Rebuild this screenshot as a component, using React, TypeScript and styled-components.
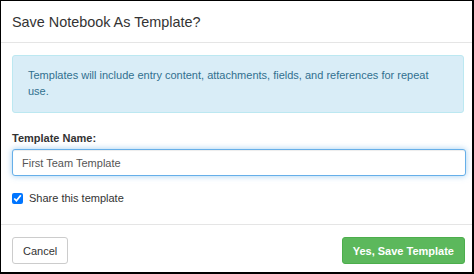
import React from "react";
import styled, { createGlobalStyle } from "styled-components";

const GlobalStyle = createGlobalStyle`
  html, body {
    margin: 0;
    padding: 0;
    background: #ffffff;
  }
  body {
    font-family: "Liberation Sans", Arial, sans-serif;
    color: #333333;
  }
`;

const Modal = styled.div`
  box-sizing: border-box;
  width: 474px;
  height: 274px;
  border-style: solid;
  border-color: #000000;
  border-width: 1px 2px 2px 1px;
  background: #ffffff;
  display: flex;
  flex-direction: column;
`;

const Header = styled.div`
  height: 41px;
  padding: 0 11px;
  border-bottom: 1px solid #e5e5e5;
  display: flex;
  align-items: center;
`;

const Title = styled.h4`
  margin: 0;
  font-size: 14.4px;
  font-weight: normal;
  color: #333333;
`;

const Body = styled.div`
  flex: 1;
  padding: 12px 8px 0 11px;
  display: flex;
  flex-direction: column;
`;

const Alert = styled.div`
  box-sizing: border-box;
  height: 58px;
  padding: 11px 15px;
  background: #d9edf7;
  border: 1px solid #bce8f1;
  border-radius: 3px;
  color: #31708f;
  font-size: 11px;
  line-height: 16px;
`;

const Label = styled.label`
  margin-top: 17px;
  font-size: 11px;
  font-weight: bold;
  line-height: 16px;
  color: #333333;
`;

const Input = styled.input`
  box-sizing: border-box;
  margin-top: 3px;
  width: 454px;
  height: 27px;
  padding: 0 9px;
  border: 1px solid #66afe9;
  border-radius: 3px;
  outline: none;
  box-shadow: inset 0 1px 1px rgba(0, 0, 0, 0.075),
    0 0 6px rgba(102, 175, 233, 0.6);
  font-family: "Liberation Sans", Arial, sans-serif;
  font-size: 11px;
  color: #555555;
`;

const CheckRow = styled.label`
  margin-top: 14px;
  display: flex;
  align-items: center;
  gap: 6px;
  font-size: 11px;
  line-height: 16px;
  color: #333333;
`;

const Check = styled.input`
  margin: 0;
  width: 11px;
  height: 11px;
`;

const Footer = styled.div`
  height: 35px;
  padding: 12px 7px 0 11px;
  border-top: 1px solid #e5e5e5;
  display: flex;
  justify-content: space-between;
  align-items: flex-start;
`;

const Button = styled.button<{ $primary?: boolean }>`
  box-sizing: border-box;
  height: 27px;
  padding: 0 10px;
  border-radius: 3px;
  border: 1px solid ${(p) => (p.$primary ? "#4cae4c" : "#cccccc")};
  background: ${(p) => (p.$primary ? "#5cb85c" : "#ffffff")};
  color: ${(p) => (p.$primary ? "#ffffff" : "#333333")};
  font-family: "Liberation Sans", Arial, sans-serif;
  font-size: 11px;
  font-weight: ${(p) => (p.$primary ? "bold" : "normal")};
`;

export default function App() {
  return (
    <>
      <GlobalStyle />
      <Modal>
        <Header>
          <Title>Save Notebook As Template?</Title>
        </Header>
        <Body>
          <Alert>
            Templates will include entry content, attachments, fields, and
            references for repeat use.
          </Alert>
          <Label htmlFor="template-name">Template Name:</Label>
          <Input id="template-name" defaultValue="First Team Template" />
          <CheckRow>
            <Check type="checkbox" defaultChecked />
            Share this template
          </CheckRow>
        </Body>
        <Footer>
          <Button type="button">Cancel</Button>
          <Button type="button" $primary>
            Yes, Save Template
          </Button>
        </Footer>
      </Modal>
    </>
  );
}
